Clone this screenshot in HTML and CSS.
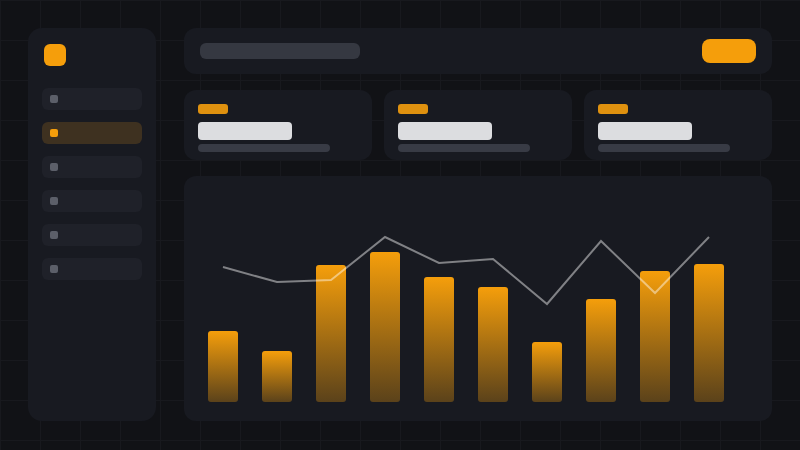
FILE: index.html
```html
<!DOCTYPE html>
<html lang="en">
<head>
    <meta charset="UTF-8">
    <meta name="viewport" content="width=device-width, initial-scale=1.0">
    <title>Dashboard</title>
    <link rel="stylesheet" href="styles.css">
</head>
<body>

    <div class="layout">
        <aside class="sidebar">
            <div class="logo"></div>
            <nav class="nav">
                <div class="nav-item"><span class="dot"></span></div>
                <div class="nav-item active"><span class="dot"></span></div>
                <div class="nav-item"><span class="dot"></span></div>
                <div class="nav-item"><span class="dot"></span></div>
                <div class="nav-item"><span class="dot"></span></div>
                <div class="nav-item"><span class="dot"></span></div>
            </nav>
        </aside>

        <main class="main">
            <header class="topbar">
                <div class="search"></div>
                <div class="btn"></div>
            </header>

            <section class="cards">
                <div class="card">
                    <div class="tag"></div>
                    <div class="value"></div>
                    <div class="caption"></div>
                </div>
                <div class="card">
                    <div class="tag"></div>
                    <div class="value"></div>
                    <div class="caption"></div>
                </div>
                <div class="card">
                    <div class="tag"></div>
                    <div class="value"></div>
                    <div class="caption"></div>
                </div>
            </section>

            <section class="chart">
                <div class="bars">
                    <div class="bar" style="height: 71px"></div>
                    <div class="bar" style="height: 51px"></div>
                    <div class="bar" style="height: 137px"></div>
                    <div class="bar" style="height: 150px"></div>
                    <div class="bar" style="height: 125px"></div>
                    <div class="bar" style="height: 115px"></div>
                    <div class="bar" style="height: 60px"></div>
                    <div class="bar" style="height: 103px"></div>
                    <div class="bar" style="height: 131px"></div>
                    <div class="bar" style="height: 138px"></div>
                </div>
                <svg class="trend" width="588" height="245" viewBox="0 0 588 245">
                    <polyline points="39,91 93,106 147,104 201,61 255,87 309,83 363,128 417,65 471,117 525,61"
                        fill="none" stroke="rgba(255,255,255,0.45)" stroke-width="2" stroke-linejoin="miter"/>
                </svg>
            </section>
        </main>
    </div>

</body>
</html>
```

FILE: styles.css
```css
body {
    margin: 0;
    padding: 28px;
    height: 450px;
    box-sizing: border-box;
    background-color: #111216;
    background-image:
        linear-gradient(to right, #18191e 1px, transparent 1px),
        linear-gradient(to bottom, #18191e 1px, transparent 1px);
    background-size: 40px 40px;
    font-family: "Inter", sans-serif;
    overflow: hidden;
}

.layout { display: flex; gap: 28px; }

/* sidebar */
.sidebar {
    width: 128px;
    height: 393px;
    box-sizing: border-box;
    padding: 16px 14px;
    background: #181a21;
    border-radius: 14px;
}
.logo { width: 22px; height: 22px; margin-left: 2px; background: #f59e0b; border-radius: 6px; }
.nav { display: flex; flex-direction: column; gap: 12px; margin-top: 22px; }
.nav-item {
    height: 22px;
    background: #1f2129;
    border-radius: 6px;
    display: flex;
    align-items: center;
    padding-left: 8px;
}
.nav-item .dot { width: 8px; height: 8px; border-radius: 2px; background: #5c5f69; }
.nav-item.active { background: #3e3120; }
.nav-item.active .dot { background: #f59e0b; }

/* main column */
.main { width: 588px; display: flex; flex-direction: column; gap: 16px; }

.topbar {
    height: 46px;
    padding: 0 16px;
    background: #181a21;
    border-radius: 12px;
    display: flex;
    align-items: center;
    justify-content: space-between;
}
.search { width: 160px; height: 16px; background: #353841; border-radius: 6px; }
.btn { width: 54px; height: 24px; background: #f59e0b; border-radius: 8px; }

.cards { display: flex; gap: 12px; }
.card {
    flex: 1;
    height: 70px;
    box-sizing: border-box;
    padding: 14px;
    background: #181a21;
    border-radius: 12px;
}
.tag { width: 30px; height: 10px; background: #df910f; border-radius: 3px; }
.value { width: 94px; height: 18px; margin-top: 8px; background: #dcdde0; border-radius: 4px; }
.caption { width: 132px; height: 8px; margin-top: 4px; background: #383b45; border-radius: 4px; }

.chart {
    position: relative;
    height: 245px;
    box-sizing: border-box;
    padding: 0 24px 19px;
    background: #181a21;
    border-radius: 12px;
    display: flex;
    align-items: flex-end;
}
.bars { display: flex; align-items: flex-end; gap: 24px; }
.bar {
    width: 30px;
    border-radius: 3px;
    background: linear-gradient(to bottom, #f59e0b, rgba(245, 158, 11, 0.3));
}
.trend { position: absolute; left: 0; top: 0; }
```
